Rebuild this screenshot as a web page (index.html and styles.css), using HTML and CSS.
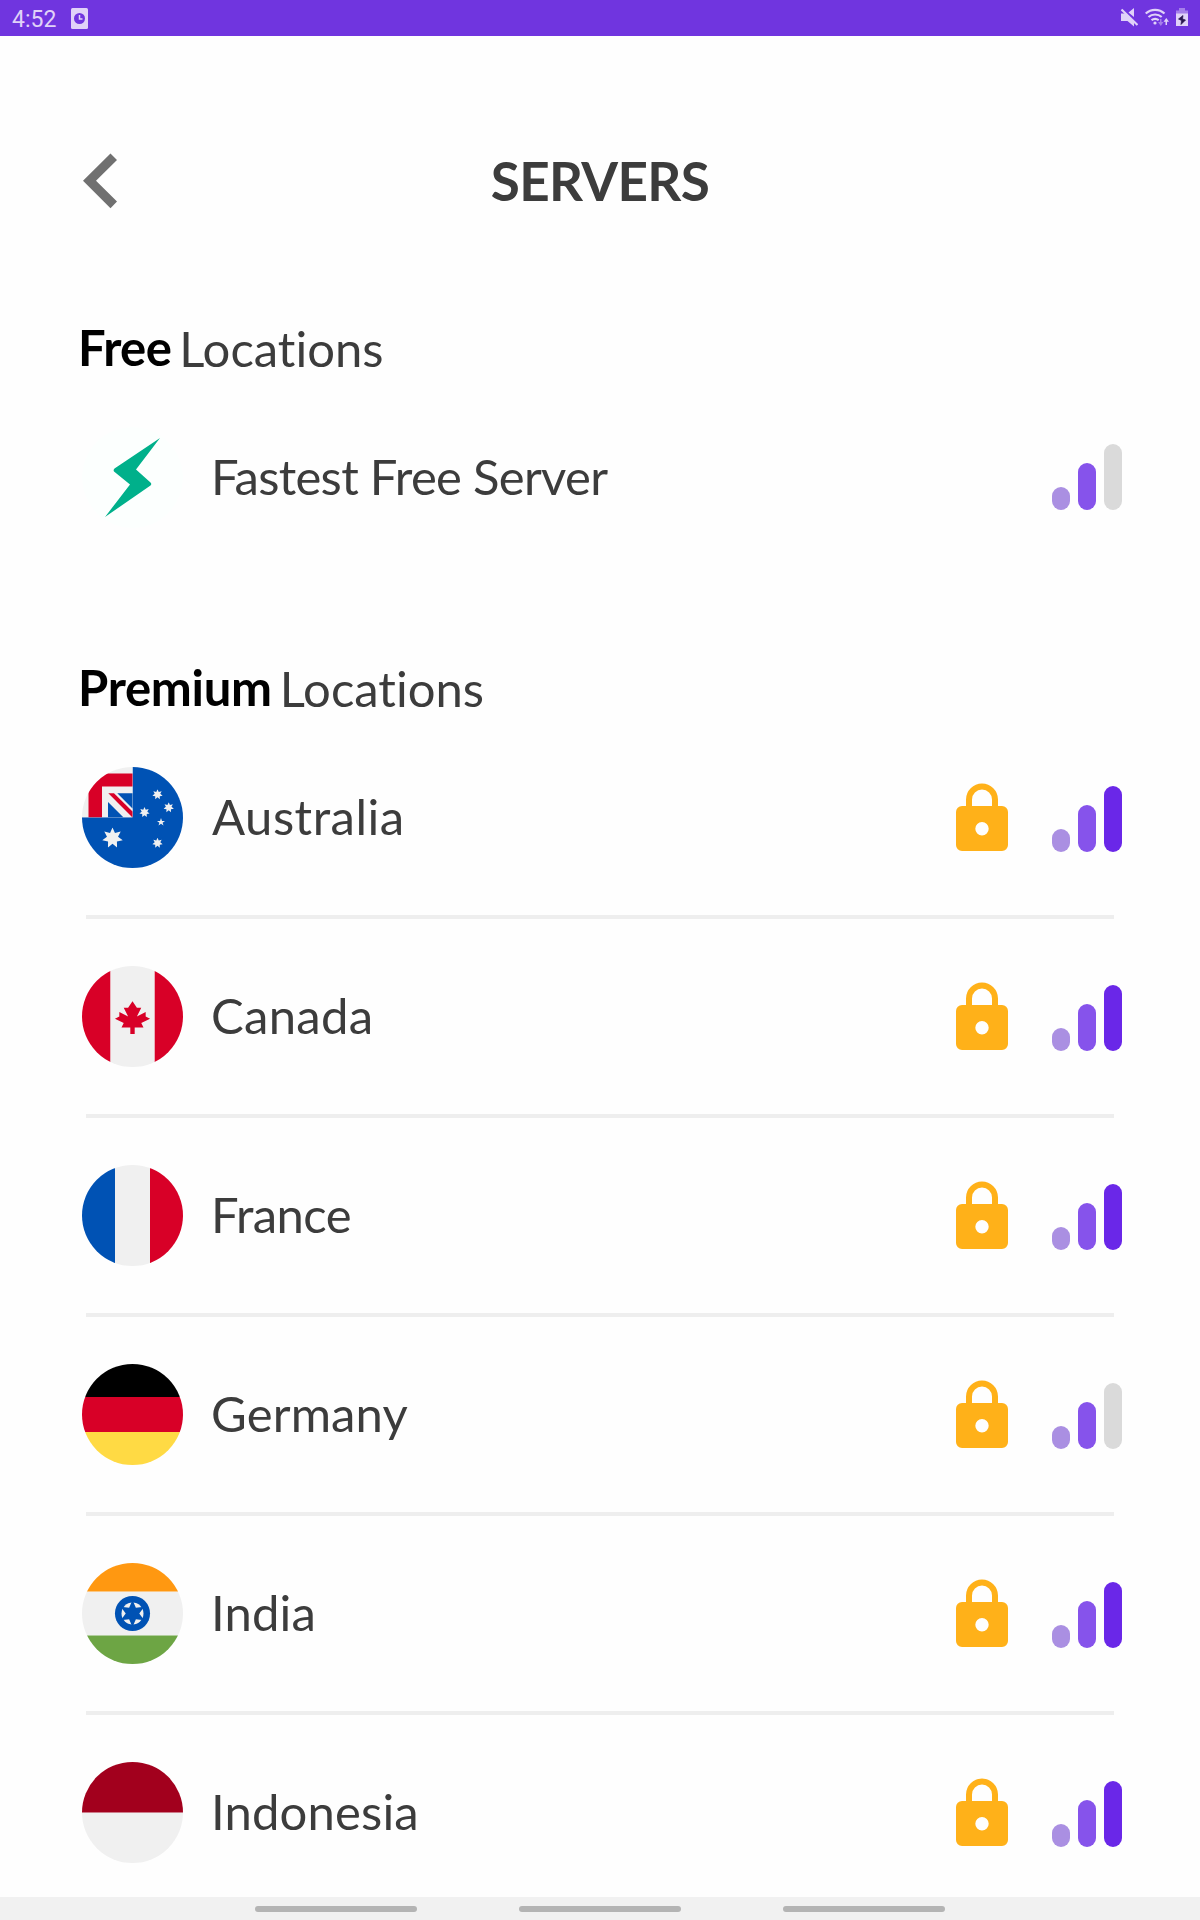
FILE: index.html
```
<!DOCTYPE html>
<html lang="en">
<head>
    <meta charset="UTF-8">
    <meta name="viewport" content="width=device-width, initial-scale=1.0">
    <title>Servers</title>
    <link rel="stylesheet" href="styles.css">
</head>
<body>
    <!-- Shared icons -->
    <svg class="icon-defs" width="0" height="0">
        <symbol id="lock" viewBox="0 0 52 69">
            <path d="M13 26V16.500a13 13 0 0 1 26 0V26" fill="none" stroke="#ffb119" stroke-width="6"/>
            <path fill-rule="evenodd" fill="#ffb119" d="M6 23h40a6 6 0 0 1 6 6v33a6 6 0 0 1-6 6H6a6 6 0 0 1-6-6V29a6 6 0 0 1 6-6zM26 39a6.700 6.700 0 1 0 0 13.400a6.700 6.700 0 1 0 0-13.400z"/>
        </symbol>
        <symbol id="star" viewBox="-10 -10 20 20">
            <polygon fill="#f0f0f0" points="0,-10 2.340,-4.870 7.820,-6.230 5.260,-1.200 9.750,2.230 4.220,3.370 4.340,9.010 0,5.400 -4.340,9.010 -4.220,3.370 -9.750,2.230 -5.260,-1.200 -7.820,-6.230 -2.340,-4.870"/>
        </symbol>
    </svg>

    <div class="status-bar">
        <span class="time">4:52</span>
        <svg class="status-app" width="17" height="21" viewBox="0 0 17 21">
            <rect width="17" height="21" rx="1.500" fill="#e0d2f8"/>
            <circle cx="8.500" cy="10.500" r="5.500" fill="#7035df"/>
            <path d="M8.500 7v4h3" fill="none" stroke="#e0d2f8" stroke-width="1.500"/>
        </svg>
        <div class="status-icons">
            <svg width="17" height="19" viewBox="0 0 17 19">
                <path d="M0 5.500h5l8 8v5L6.500 13H0zM7.500 4.500L13 0v9z" fill="#e0d2f8"/>
                <path d="M0.500 1.500l16 15.500" stroke="#e0d2f8" stroke-width="2.200"/>
            </svg>
            <svg width="24" height="19" viewBox="0 0 24 19">
                <g fill="none" stroke="#e0d2f8" stroke-width="2.200">
                    <path d="M0.700 5.500a14 14 0 0 1 18.800 0"/>
                    <path d="M3.500 9a10 10 0 0 1 13.200 0"/>
                    <path d="M6.500 12.200a6 6 0 0 1 7.200 0"/>
                </g>
                <circle cx="10" cy="15" r="1.600" fill="#e0d2f8"/>
                <path d="M13 14h2v-3h1.500v3h2l-2.700 4z" fill="#a57fea"/>
                <path d="M21.300 10l2.700 3.700h-2V17h-1.500v-3.300h-2z" fill="#e0d2f8"/>
            </svg>
            <svg width="12" height="19" viewBox="0 0 12 19">
                <path d="M0 8V2.500h3V0h6v2.500h3V8z" fill="#a57fea"/>
                <path d="M0 5.500h12V18H0z" fill="#e0d2f8"/>
                <path d="M7 7.500L2.500 11l3 1.500-.5 4L9.500 12 6.500 11z" fill="#29164f" stroke="#29164f" stroke-width=".7"/>
            </svg>
        </div>
    </div>

    <header class="header">
        <svg class="back" width="34" height="56" viewBox="0 0 34 56">
            <path d="M27.500 0.500L34 7L13 27.800L34 48.600L27.500 55.300L0 27.800z" fill="#707070"/>
        </svg>
        <h1>SERVERS</h1>
    </header>

    <main class="content">
        <h2 class="section-title"><b class="free">Free</b><span>Locations</span></h2>
        <div class="server">
            <svg class="flag" viewBox="0 0 101 101">
                <circle cx="50.500" cy="50.500" r="50.500" fill="#fcfffe"/>
                <path d="M78 11L54 42.500L68.500 55.500Q70 57 68.500 58.500L23 90L48 57.500L32 44.500Q31 43 32.500 41.500z" fill="#00b08b"/>
            </svg>
            <span class="name fastest">Fastest Free Server</span>
            <div class="signal medium"><i></i><i></i><i></i></div>
        </div>

        <h2 class="section-title premium-title"><b class="premium">Premium</b><span>Locations</span></h2>
        <ul class="server-list">
            <li class="server">
                <svg class="flag" viewBox="0 0 101 101">
                    <path d="M50.500 0H101v101H0V50.300h50.500z" fill="#0052b4"/>
                    <path d="M0 0h50.500v50.300H0z" fill="#f0f0f0"/>
                    <path d="M6.500 6.500h44v13H20v30.800H6.500z" fill="#d80027"/>
                    <path d="M26 35l15.300 15.300H26zM35.300 26.300h15.200v15.200z" fill="#0052b4"/>
                    <path d="M26.300 26.300H32l18.500 18.300v5.900z" fill="#d80027"/>
                    <use href="#star" x="20" y="60.500" width="21" height="21"/>
                    <use href="#star" x="70.200" y="22.200" width="10.600" height="10.600"/>
                    <use href="#star" x="81.400" y="35.200" width="10.600" height="10.600"/>
                    <use href="#star" x="57.200" y="40" width="10.600" height="10.600"/>
                    <use href="#star" x="70.200" y="70.700" width="10.600" height="10.600"/>
                    <polygon fill="#f0f0f0" points="79,51 80,53.900 83,53.900 80.600,55.700 81.500,58.600 79,56.800 76.500,58.600 77.400,55.700 75,53.900 78,53.900"/>
                </svg>
                <span class="name australia">Australia</span>
                <svg class="lock"><use href="#lock"/></svg>
                <div class="signal"><i></i><i></i><i></i></div>
            </li>
            <li class="server">
                <svg class="flag" viewBox="0 0 512 512">
                    <path d="M0 0h144.700v512H0zM367.300 0H512v512H367.300z" fill="#d80027"/>
                    <path d="M144.700 0h222.600v512H144.700z" fill="#f0f0f0"/>
                    <path fill="#d80027" d="M300.522 289.391l44.522-22.261l-22.261-11.130v-22.261l-44.522 22.261l22.261-44.522h-22.261L256 178.087l-22.261 33.391h-22.261l22.261 44.522l-44.522-22.261V256l-22.261 11.130l44.522 22.261l-11.130 22.261h44.522v33.391h22.261v-33.391h44.522z"/>
                </svg>
                <span class="name canada">Canada</span>
                <svg class="lock"><use href="#lock"/></svg>
                <div class="signal"><i></i><i></i><i></i></div>
            </li>
            <li class="server">
                <svg class="flag" viewBox="0 0 101 101">
                    <path d="M33 0h35v101H33z" fill="#f0f0f0"/>
                    <path d="M0 0h33v101H0z" fill="#0052b4"/>
                    <path d="M68 0h33v101H68z" fill="#d80027"/>
                </svg>
                <span class="name france">France</span>
                <svg class="lock"><use href="#lock"/></svg>
                <div class="signal"><i></i><i></i><i></i></div>
            </li>
            <li class="server">
                <svg class="flag" viewBox="0 0 101 101">
                    <path d="M0 33h101v35H0z" fill="#d80027"/>
                    <path d="M0 0h101v33H0z" fill="#000"/>
                    <path d="M0 68h101v33H0z" fill="#ffda44"/>
                </svg>
                <span class="name germany">Germany</span>
                <svg class="lock"><use href="#lock"/></svg>
                <div class="signal medium"><i></i><i></i><i></i></div>
            </li>
            <li class="server">
                <svg class="flag" viewBox="0 0 512 512">
                    <path d="M0 144.700h512v222.600H0z" fill="#f0f0f0"/>
                    <path d="M0 0h512v144.700H0z" fill="#ff9811"/>
                    <path d="M0 367.300h512V512H0z" fill="#6da544"/>
                    <circle cx="256" cy="256" r="89" fill="#0052b4"/>
                    <circle cx="256" cy="256" r="55.650" fill="#f0f0f0"/>
                    <polygon fill="#0052b4" points="256,187.326 273.169,226.264 315.473,221.663 290.337,256 315.473,290.337 273.169,285.736 256,324.674 238.831,285.736 196.527,290.337 221.663,256 196.527,221.663 238.831,226.264"/>
                </svg>
                <span class="name india">India</span>
                <svg class="lock"><use href="#lock"/></svg>
                <div class="signal"><i></i><i></i><i></i></div>
            </li>
            <li class="server">
                <svg class="flag" viewBox="0 0 101 101">
                    <path d="M0 50.400h101V101H0z" fill="#f0f0f0"/>
                    <path d="M0 0h101v50.400H0z" fill="#a2001d"/>
                </svg>
                <span class="name indonesia">Indonesia</span>
                <svg class="lock"><use href="#lock"/></svg>
                <div class="signal"><i></i><i></i><i></i></div>
            </li>
        </ul>
    </main>

    <nav class="nav-bar"><i></i><i></i><i></i></nav>
</body>
</html>
```
FILE: styles.css
```
* {
    box-sizing: border-box;
}

body {
    margin: 0;
    height: 1920px;
    display: flex;
    flex-direction: column;
    overflow: hidden;
    background: #fefefe;
    color: #3c3c3c;
    font-family: Lato, "Open Sans", sans-serif;
    font-variant-ligatures: none;
}

.icon-defs {
    position: absolute;
}

/* Status bar */
.status-bar {
    flex: none;
    display: flex;
    align-items: center;
    height: 36px;
    padding: 0 12px 0 12px;
    background: #7035df;
    color: #e0d2f8;
    font-family: Roboto, sans-serif;
    font-size: 23px;
}

.time {
    width: 59px;
    padding-top: 2px;
}

.status-icons {
    display: flex;
    gap: 7px;
    margin-left: auto;
    margin-bottom: 1px;
}

/* Header */
.header {
    flex: none;
    display: grid;
    grid-template-columns: 34px 1fr 34px;
    align-items: center;
    height: 264px;
    padding: 26px 83px 0;
}

h1 {
    margin: 0;
    font-size: 53px;
    line-height: 80px;
    letter-spacing: -0.6px;
    text-align: center;
}

/* Server lists */
.content {
    flex: 1;
    min-height: 0;
    overflow: hidden;
}

.section-title {
    display: flex;
    gap: 8px;
    height: 80px;
    margin: 0;
    padding: 9px 0 0 78px;
    font-size: 49px;
    font-weight: 400;
    line-height: 76px;
    white-space: nowrap;
}

.section-title b {
    color: #000;
    letter-spacing: -0.3px;
}

.section-title .free {
    letter-spacing: -0.6px;
}

.section-title span {
    margin-top: 1px;
}

.premium-title {
    margin-top: 65px;
}

.server-list {
    margin: 0;
    padding: 0;
    list-style: none;
}

.server {
    display: flex;
    align-items: center;
    height: 195px;
    padding: 0 78px 0 82px;
}

.server-list .server {
    height: 199px;
    padding-bottom: 4px;
    background: linear-gradient(#eee, #eee) 86px 195px / 1028px 4px no-repeat;
}

.flag {
    flex: none;
    width: 101px;
    height: 101px;
    margin-right: 28px;
    border-radius: 50%;
}

.name {
    margin-bottom: 3px;
    font-size: 49px;
    line-height: 76px;
    white-space: nowrap;
}

.fastest {
    letter-spacing: -0.7px;
}

.australia {
    padding-left: 1px;
    letter-spacing: 0.5px;
}

.canada {
    letter-spacing: 0.3px;
}

.france {
    letter-spacing: -0.6px;
}

.germany,
.india,
.indonesia {
    letter-spacing: 0.15px;
}

.lock {
    width: 52px;
    height: 69px;
    margin-left: auto;
    margin-right: 44px;
}

.signal {
    display: flex;
    align-items: flex-end;
    gap: 8px;
    height: 66px;
    margin-top: 3px;
}

.name + .signal {
    margin-top: 0;
    margin-bottom: 2px;
    margin-left: auto;
}

.signal i {
    width: 18px;
    height: 23px;
    border-radius: 9px;
    background: #aa8fe2;
}

.signal i:nth-child(2) {
    height: 47px;
    background: #8653eb;
}

.signal i:nth-child(3) {
    height: 66px;
    background: #6a27e8;
}

.signal.medium i:nth-child(3) {
    background: #dadada;
}

/* Bottom navigation handles */
.nav-bar {
    flex: none;
    display: flex;
    justify-content: center;
    gap: 102px;
    height: 23px;
    padding-top: 9px;
    background: #f1f1f1;
}

.nav-bar i {
    width: 162px;
    height: 6px;
    border-radius: 3px;
    background: #b4b4b4;
}
```
